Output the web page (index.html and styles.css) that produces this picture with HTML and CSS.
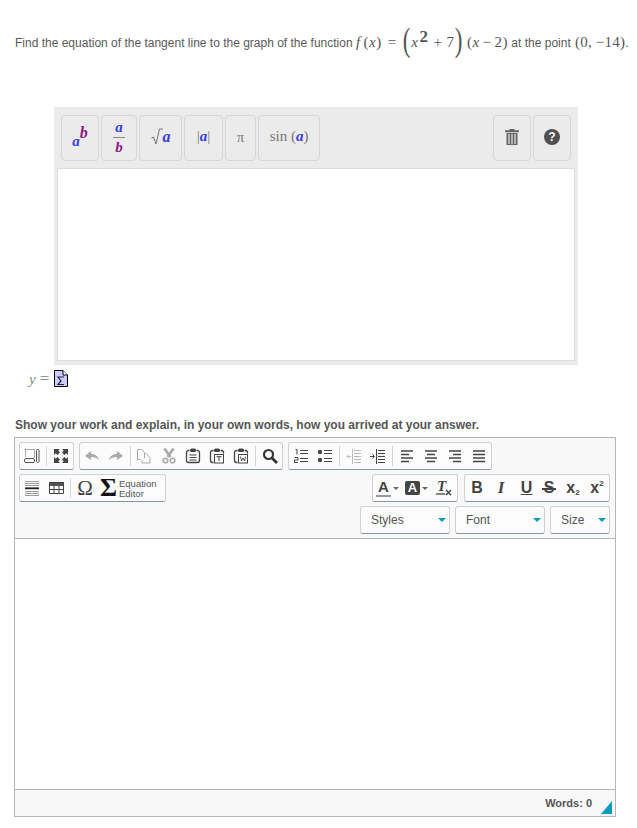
FILE: index.html
```html
<!DOCTYPE html>
<html lang="en">
<head>
<meta charset="utf-8">
<title>Tangent line question</title>
<link rel="stylesheet" href="styles.css">
</head>
<body>
<p class="question">Find the equation of the tangent line to the graph of the function <span class="math"><i class="fn">f</i><span class="gap-s">(<i>x</i>)</span><span class="eqs">=</span></span><span class="math big open">(</span><span class="math"><i>x</i><sup>2</sup><span class="plus">+</span>7</span><span class="math big close">)</span><span class="math tail">(<i>x</i><span class="minus">−</span>2)</span> at the point <span class="math pt">(0, −14)</span>.</p>

<section class="panel">
  <div class="panel-tools">
    <div class="ptools">
      <button class="pbtn w38"><span class="sym pow"><i class="va">a</i><sup class="vb sup-b">b</sup></span></button>
      <button class="pbtn w36"><span class="frac"><i class="va">a</i><i class="vb">b</i></span></button>
      <button class="pbtn w43"><svg class="rad" width="12" height="17" viewBox="0 0 12 17"><path d="M0.500 10 L2.500 9 L5 16 L8.500 1 L12 1" fill="none" stroke="#777" stroke-width="1"/></svg><span class="sym rad-a"><i class="va">a</i></span></button>
      <button class="pbtn w39"><span class="sym abs"><span class="gray">|</span><i class="va">a</i><span class="gray">|</span></span></button>
      <button class="pbtn w31"><span class="sym gray pi">π</span></button>
      <button class="pbtn w62"><span class="sym gray sin">sin (<i class="va">a</i>)</span></button>
    </div>
    <div class="ptools">
      <button class="pbtn w38"><svg class="lift" width="16" height="16" viewBox="0 0 16 16"><path d="M5.500 0h5v1.200h4.500v2h-14v-2h4.500z M2.500 4h11v12h-11z" fill="#666"/><path d="M5 5v10M8 5v10M11 5v10" stroke="#eee" stroke-width="1.100"/></svg></button>
      <button class="pbtn w38"><span class="help lift">?</span></button>
    </div>
  </div>
  <div class="panel-input"></div>
</section>

<div class="answer">
  <span class="y-eq"><i>y</i><span class="y-sign">=</span></span>
  <svg class="doc" width="14" height="17" viewBox="0 0 14 17"><path d="M0.500 0.500H9L13.500 5V16.500H0.500Z" fill="#ccccff" stroke="#000"/><path d="M9 0.500V5H13.500" fill="#fff" stroke="#000"/><path d="M10 7H4L7 11L4 14.500H10" fill="none" stroke="#223" stroke-width="1.200"/></svg>
</div>

<p class="prompt">Show your work and explain, in your own words, how you arrived at your answer.</p>

<section class="editor">
  <div class="toolbar">
    <div class="row">
      <div class="group">
        <span class="tb"><svg width="16" height="16" viewBox="0 0 16 16"><path d="M1.500 1.500h9v8M1.500 1.500v8" fill="none" stroke="#555" stroke-dasharray="1 1"/><rect x="0.500" y="10.500" width="10" height="4" rx="1.500" fill="none" stroke="#555"/><rect x="12.500" y="1.500" width="2.500" height="13" rx="1" fill="none" stroke="#555"/></svg></span>
        <span class="sep"></span>
        <span class="tb"><svg width="16" height="16" viewBox="0 0 16 16"><path d="M1 1h6L5.300 2.700 7 4.500 4.500 7 2.700 5.300 1 7zM15 1v6L13.300 5.300 11.500 7 9 4.500 10.700 2.700 9 1zM1 15V9l1.700 1.700L4.500 9 7 11.500 5.300 13.300 7 15zM15 15H9l1.700-1.700L9 11.500 11.500 9l1.800 1.700L15 9z" fill="#444"/></svg></span>
      </div>
      <div class="group">
        <span class="tb"><svg width="16" height="16" viewBox="0 0 16 16"><path d="M1 8L7 3v3c4 0 7 2 8 6-2-2-4-3-8-3v3z" fill="#aaa"/></svg></span>
        <span class="tb"><svg width="16" height="16" viewBox="0 0 16 16"><path d="M15 8L9 3v3C5 6 2 8 1 12c2-2 4-3 8-3v3z" fill="#aaa"/></svg></span>
        <span class="sep"></span>
        <span class="tb"><svg width="16" height="16" viewBox="0 0 16 16"><path d="M0.500 1.500h4l3 3v6M0.500 1.500v10h3M7 5.500h2l4 4v5.500H5v-3" fill="none" stroke="#aaa"/></svg></span>
        <span class="tb"><svg width="16" height="16" viewBox="0 0 16 16"><path d="M3.500 0.500l6 8.500M12.500 0.500l-6 8.500" stroke="#aaa" stroke-width="2.600"/><circle cx="4.500" cy="12.500" r="2.300" fill="none" stroke="#aaa" stroke-width="1.600"/><circle cx="11.500" cy="12.500" r="2.300" fill="none" stroke="#aaa" stroke-width="1.600"/></svg></span>
        <span class="tb"><svg width="16" height="16" viewBox="0 0 16 16"><path d="M4.500 2.500h-1a2 2 0 0 0-2 2v8a2 2 0 0 0 2 2h9a2 2 0 0 0 2-2v-8a2 2 0 0 0-2-2h-1" fill="none" stroke="#444" stroke-width="1.300"/><rect x="5" y="0.500" width="6" height="3.500" rx="1.500" fill="#444"/><path d="M4.500 7h7M4.500 9.500h7M4.500 12h7" stroke="#444" stroke-width="1.200"/></svg></span>
        <span class="tb"><svg width="16" height="16" viewBox="0 0 16 16"><path d="M4.500 2.500h-1a2 2 0 0 0-2 2v8a2 2 0 0 0 2 2h1" fill="none" stroke="#444" stroke-width="1.300"/><path d="M11.500 2.500h1a2 2 0 0 1 2 2v1" fill="none" stroke="#444" stroke-width="1.300"/><rect x="5" y="0.500" width="6" height="3.500" rx="1.500" fill="#444"/><rect x="5.500" y="6.500" width="9" height="8.500" fill="#fff" stroke="#444"/><path d="M7.500 8.700h5M10 8.700v4.500" stroke="#444"/></svg></span>
        <span class="tb"><svg width="16" height="16" viewBox="0 0 16 16"><path d="M4.500 2.500h-1a2 2 0 0 0-2 2v8a2 2 0 0 0 2 2h1" fill="none" stroke="#444" stroke-width="1.300"/><path d="M11.500 2.500h1a2 2 0 0 1 2 2v1" fill="none" stroke="#444" stroke-width="1.300"/><rect x="5" y="0.500" width="6" height="3.500" rx="1.500" fill="#444"/><rect x="5.500" y="6.500" width="9" height="8.500" fill="#fff" stroke="#444"/><path d="M7.500 8.500l1 4.500 1.500-3 1.500 3 1-4.500" fill="none" stroke="#444" stroke-width="0.900"/></svg></span>
        <span class="sep"></span>
        <span class="tb"><svg width="16" height="16" viewBox="0 0 16 16"><circle cx="6.500" cy="6.500" r="4.500" fill="none" stroke="#333" stroke-width="2.200"/><path d="M10 10l5 5" stroke="#333" stroke-width="2.800"/></svg></span>
      </div>
      <div class="group">
        <span class="tb"><svg width="16" height="16" viewBox="0 0 16 16"><path d="M7 2.500h8M7 5.500h8M7 10.500h8M7 13.500h8" stroke="#444"/><path d="M2.500 1.500h1.500v5" fill="none" stroke="#444"/><path d="M1.500 9.500h3.500v2.500h-3.500v2.500h3.500" fill="none" stroke="#444"/></svg></span>
        <span class="tb"><svg width="16" height="16" viewBox="0 0 16 16"><circle cx="3" cy="4" r="2.200" fill="#444"/><circle cx="3" cy="12" r="2.200" fill="#444"/><path d="M7 2.500h8M7 5.500h8M7 10.500h8M7 13.500h8" stroke="#444"/></svg></span>
        <span class="sep"></span>
        <span class="tb"><svg width="16" height="16" viewBox="0 0 16 16"><path d="M8 2.500h7M8 5.500h7M8 8.500h7M8 11.500h7M8 14.500h7M6.500 1v15" stroke="#bbb"/><path d="M5 8.500H1M3 6.500l-2 2 2 2" fill="none" stroke="#bbb"/></svg></span>
        <span class="tb"><svg width="16" height="16" viewBox="0 0 16 16"><path d="M8 2.500h7M8 5.500h7M8 8.500h7M8 11.500h7M8 14.500h7M6.500 1v15" stroke="#444"/><path d="M0 8.500h4M2.500 6.500l2 2-2 2" fill="none" stroke="#444"/></svg></span>
        <span class="sep"></span>
        <span class="tb"><svg width="16" height="16" viewBox="0 0 16 16"><path d="M2 3h12M2 6.500h8M2 10h12M2 13.500h8" stroke="#444" stroke-width="1.700"/></svg></span>
        <span class="tb"><svg width="16" height="16" viewBox="0 0 16 16"><path d="M2 3h12M4 6.500h8M2 10h12M4 13.500h8" stroke="#444" stroke-width="1.700"/></svg></span>
        <span class="tb"><svg width="16" height="16" viewBox="0 0 16 16"><path d="M2 3h12M6 6.500h8M2 10h12M6 13.500h8" stroke="#444" stroke-width="1.700"/></svg></span>
        <span class="tb"><svg width="16" height="16" viewBox="0 0 16 16"><path d="M2 3h12M2 6.500h12M2 10h12M2 13.500h12" stroke="#444" stroke-width="1.700"/></svg></span>
      </div>
    </div>
    <div class="row between">
      <div class="group">
        <span class="tb"><svg width="16" height="16" viewBox="0 0 16 16"><path d="M1 1.500h14M1 3.500h14M1 5.500h14M1 11.500h14M1 13.500h14M1 15.500h14" stroke="#888" stroke-width="0.800"/><path d="M1 8.300h14" stroke="#222" stroke-width="1.800"/></svg></span>
        <span class="tb"><svg width="16" height="16" viewBox="0 0 16 16"><path d="M1 2h15v4H1z" fill="#555"/><path d="M1.500 2.500h14v11h-14zM1.500 9.500h14M6 2.500v11M11 2.500v11" fill="none" stroke="#444"/></svg></span>
        <span class="sep"></span>
        <span class="tb omega">Ω</span>
        <span class="tb eq"><span class="sigma">Σ</span><span class="eq-label">Equation<br>Editor</span></span>
      </div>
      <div class="rgroups">
        <div class="group">
          <span class="tb w29 color"><span class="fc">A</span><span class="arr"></span></span>
          <span class="tb w29 color"><span class="bgc">A</span><span class="arr"></span></span>
          <span class="tb w26"><span class="tx">T</span><svg class="tx-x" width="16" height="16" viewBox="0 0 16 16"><path d="M0 14h9" stroke="#444" stroke-width="1.300"/><path d="M10 10l5 5M15 10l-5 5" stroke="#444" stroke-width="1.500"/></svg></span>
        </div>
        <div class="group">
          <span class="tb fmt b">B</span>
          <span class="tb fmt it">I</span>
          <span class="tb fmt u">U</span>
          <span class="tb fmt s">S</span>
          <span class="tb fmt sub">x<small>2</small></span>
          <span class="tb fmt sup">x<small>2</small></span>
        </div>
      </div>
    </div>
    <div class="row end">
      <div class="combo w90">Styles<span class="caret"></span></div>
      <div class="combo w90">Font<span class="caret"></span></div>
      <div class="combo w60">Size<span class="caret"></span></div>
    </div>
  </div>
  <div class="body"></div>
  <div class="foot"><span class="words">Words: 0</span><span class="grip"></span></div>
</section>
</body>
</html>
```

FILE: styles.css
```css
* { box-sizing: border-box; }
html, body { margin: 0; padding: 0; }
body { width: 637px; height: 828px; overflow: hidden; background: #fff; font-family: "Liberation Sans", Arial, sans-serif; color: #5a5a5a; }

.question { margin: 0; padding: 27px 0 0 15px; height: 107px; font-size: 12px; line-height: 30px; white-space: nowrap; }
.math { font-family: "Liberation Serif", serif; font-size: 15px; color: #555; letter-spacing: 0.500px; }
.math sup { font-size: 17px; font-weight: bold; line-height: 0; vertical-align: 5px; margin-left: 1px; }
.fn { margin-right: 3px; }
.eqs { margin: 0 4px 0 6px; }
.plus { margin: 0 4px 0 5px; }
.minus { margin: 0 3px; }
.big { font-size: 33px; line-height: 0; vertical-align: -4px; display: inline-block; transform: scaleX(0.7); }
.open { margin: 0 -1px 0 0; }
.close { margin: 0 2px 0 -1px; }
.pt { margin-left: 1px; letter-spacing: 0.200px; }

.panel { margin-left: 54px; width: 524px; height: 258px; background: #ebebeb; padding: 8px 3px 4px 3px; }
.panel-tools { display: flex; justify-content: space-between; padding: 0 4px; }
.ptools { display: flex; gap: 2px; }
.pbtn { height: 46px; padding: 0; display: flex; align-items: center; justify-content: center; background: #ebebeb; border: 1px solid #d6d6d6; border-radius: 4px; font-family: "Liberation Serif", serif; }
.w38 { width: 38px; }
.w36 { width: 36px; }
.w43 { width: 43px; }
.w39 { width: 39px; }
.w31 { width: 31px; }
.w62 { width: 62px; }
.sym { font-size: 15px; line-height: 1; }
.pow { font-size: 15px; padding-top: 5px; }
.va { color: #3a3ae0; font-weight: bold; }
.vb { color: #8a1a8a; font-weight: bold; }
.sup-b { font-size: 16px; line-height: 0; vertical-align: 8px; font-style: italic; }
.gray { color: #777; }
.pi { font-size: 14px; }
.sin { font-size: 15px; margin-bottom: 3px; }
.abs { margin-bottom: 3px; }
.frac { display: flex; flex-direction: column; align-items: center; font-size: 15px; line-height: 15px; margin-top: -2px; }
.frac .va { border-bottom: 1px solid #888; padding: 0 2px 2px; }
.frac .vb { padding-top: 2px; }
.rad { margin-bottom: 3px; }
.rad-a { margin-bottom: 2px; font-size: 16px; }
.help { width: 16px; height: 16px; border-radius: 50%; background: #4f4f4f; color: #fff; font: bold 12px/16px "Liberation Sans", sans-serif; text-align: center; }
.lift { margin-bottom: 3px; }
.panel-input { margin-top: 7px; height: 193px; background: #fff; border: 1px solid #dcdcdc; }

.answer { display: flex; align-items: center; height: 17px; margin: 5px 0 0 29px; }
.y-eq { font-family: "Liberation Serif", serif; font-size: 15px; color: #888; width: 25px; white-space: nowrap; }
.y-sign { margin-left: 4px; font-size: 17px; }
.doc { display: block; }

.prompt { margin: 31px 0 0 15px; font-size: 12px; font-weight: bold; line-height: 14px; color: #555; }

.editor { margin: 5px 0 0 14px; width: 602px; height: 380px; border: 1px solid #b6b6b6; display: flex; flex-direction: column; }
.toolbar { height: 101px; flex: none; padding: 4px 5px 0 4px; background: #f8f8f8; border-bottom: 1px solid #b6b6b6; display: flex; flex-direction: column; gap: 4px; }
.row { display: flex; gap: 5px; height: 28px; }
.between { justify-content: space-between; }
.end { justify-content: flex-end; }
.rgroups { display: flex; gap: 6px; }
.group { display: flex; height: 28px; background: #fcfcfc; border: 1px solid #d1d1d1; border-bottom-color: #7f9aa0; border-radius: 3px; }
.tb { width: 24px; height: 26px; flex: none; display: flex; align-items: center; justify-content: center; position: relative; }
.sep { width: 5px; flex: none; position: relative; }
.sep::after { content: ""; position: absolute; left: 2px; top: 3px; bottom: 3px; width: 1px; background: #d4d4d4; }
.omega { font-family: "Liberation Serif", serif; font-size: 21px; color: #444; }
.eq { width: 68px; justify-content: flex-start; padding-left: 3px; gap: 2px; }
.sigma { font-family: "Liberation Serif", serif; font-size: 26px; font-weight: bold; color: #111; line-height: 1; }
.eq-label { font-size: 9.500px; line-height: 10px; color: #555; margin-top: 2px; }
.w29 { width: 29px; }
.w26 { width: 26px; }
.color { justify-content: flex-start; padding-left: 3px; gap: 2px; }
.fc { width: 15px; height: 17px; font-size: 15px; font-weight: bold; line-height: 14px; text-align: center; color: #444; border-bottom: 2px solid #999; }
.bgc { width: 15px; height: 14px; border-radius: 2px; background: #444; color: #fff; font-size: 13px; font-weight: bold; line-height: 14px; text-align: center; }
.arr { width: 0; height: 0; border-left: 3px solid transparent; border-right: 3px solid transparent; border-top: 3px solid #666; }
.tx { position: absolute; left: 6px; top: 3px; font: italic bold 15px/16px "Liberation Serif", serif; color: #444; }
.fmt { font-family: "Liberation Sans", sans-serif; font-size: 16px; font-weight: bold; color: #444; }
.it { font-family: "Liberation Serif", serif; font-style: italic; font-size: 17px; }
.u { text-decoration: underline; padding-left: 3px; }
.s::after { content: ""; position: absolute; left: 5px; right: 5px; top: 13px; height: 2px; background: #444; }
.fmt small { font-size: 8px; font-weight: bold; }
.sub small { align-self: flex-end; margin-bottom: 4px; }
.sup small { align-self: flex-start; margin-top: 4px; }

.combo { height: 28px; position: relative; padding: 0 0 0 10px; background: #fcfcfc; border: 1px solid #d1d1d1; border-bottom-color: #7f9aa0; border-radius: 3px; font-size: 12px; line-height: 26px; color: #555; }
.w90 { width: 90px; }
.w60 { width: 60px; }
.caret { position: absolute; right: 3px; top: 11px; width: 0; height: 0; border-left: 4.500px solid transparent; border-right: 4.500px solid transparent; border-top: 4.500px solid #0a9ac4; }

.body { flex: 1; background: #fff; }
.foot { height: 27px; flex: none; background: #f8f8f8; border-top: 1px solid #b6b6b6; position: relative; text-align: right; padding-right: 23px; font-size: 11px; font-weight: bold; line-height: 26px; color: #555; }
.grip { position: absolute; right: 3px; bottom: 2px; width: 0; height: 0; border-left: 11px solid transparent; border-bottom: 13px solid #0a9ac4; }
```
